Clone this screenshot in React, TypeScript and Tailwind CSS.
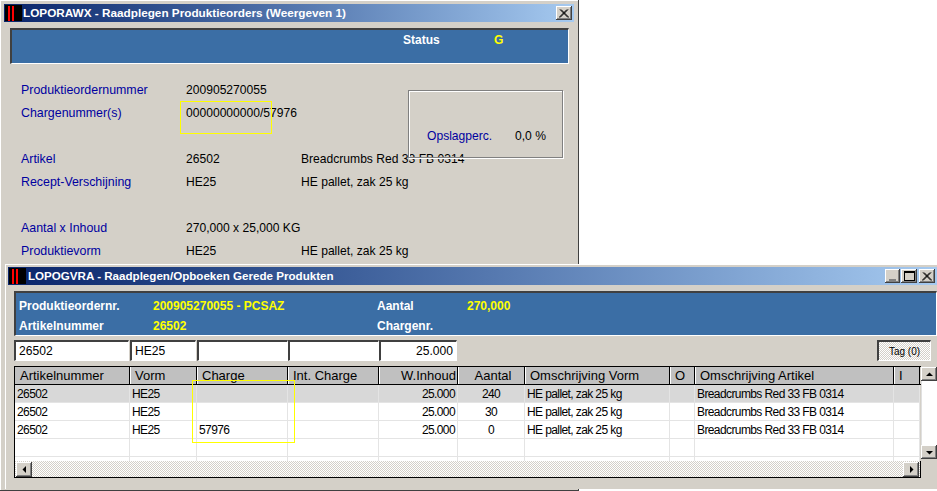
const font = "font-['Liberation_Sans',Arial,sans-serif]";
const raised = "bg-[#d4d0c8] shadow-[inset_-1px_-1px_#404040,inset_1px_1px_#fff,inset_-2px_-2px_#808080]";
const sunken = "border-t-2 border-l-2 border-t-[#404040] border-l-[#404040] border-r border-b border-r-white border-b-white";
const dither = "bg-[repeating-conic-gradient(#ffffff_0_25%,#d4d0c8_0_50%)] bg-[length:2px_2px]";
const gridCols = "grid-cols-[115px_67px_91px_91px_79px_67px_145px_25px_199px_26px]";

const columns = [
  { label: "Artikelnummer" },
  { label: "Vorm" },
  { label: "Charge" },
  { label: "Int. Charge" },
  { label: "W.Inhoud", align: "text-right" },
  { label: "Aantal", align: "text-center" },
  { label: "Omschrijving Vorm" },
  { label: "O" },
  { label: "Omschrijving Artikel" },
  { label: "I" },
];

const rows = [
  ["26502", "HE25", "", "", "25.000", "240", "HE pallet, zak 25 kg", "", "Breadcrumbs Red 33 FB 0314", ""],
  ["26502", "HE25", "", "", "25.000", "30", "HE pallet, zak 25 kg", "", "Breadcrumbs Red 33 FB 0314", ""],
  ["26502", "HE25", "57976", "", "25.000", "0", "HE pallet, zak 25 kg", "", "Breadcrumbs Red 33 FB 0314", ""],
  ["", "", "", "", "", "", "", "", "", ""],
];

const details = [
  { label: "Produktieordernummer", value: "200905270055" },
  { label: "Chargenummer(s)", value: "00000000000/57976" },
  { label: "" },
  { label: "Artikel", value: "26502", extra: "Breadcrumbs Red 33 FB 0314" },
  { label: "Recept-Verschijning", value: "HE25", extra: "HE pallet, zak 25 kg" },
  { label: "" },
  { label: "Aantal x Inhoud", value: "270,000 x 25,000 KG" },
  { label: "Produktievorm", value: "HE25", extra: "HE pallet, zak 25 kg" },
];

function AppIcon() {
  return (
    <svg width="17" height="16" viewBox="0 0 17 16" className="ml-[1px] shrink-0">
      <rect width="17" height="16" fill="#000" />
      <rect x="3" y="1" width="2" height="15" fill="#f00" />
      <rect x="7" y="1" width="2" height="15" fill="#f00" />
    </svg>
  );
}

function CloseGlyph() {
  return (
    <svg width="10" height="9" viewBox="0 0 10 9">
      <path d="M1 0.5 L9 8.5 M9 0.5 L1 8.5 M2 0.5 L10 8.5 M8 0.5 L0 8.5" stroke="#000" strokeWidth="1" fill="none" />
    </svg>
  );
}

function WinButton({ children, className = "" }: { children?: React.ReactNode; className?: string }) {
  return <div className={`${raised} flex h-[14px] w-4 items-center justify-center ${className}`}>{children}</div>;
}

function TitleBar({ title, children, textClass = "ml-[1px] text-[11.75px]" }: { title: string; children?: React.ReactNode; textClass?: string }) {
  return (
    <div className="flex h-[18px] items-center bg-gradient-to-r from-[#0a246a] to-[#a6caf0] pr-[2px]">
      <AppIcon />
      <span className={`${textClass} flex-1 whitespace-nowrap font-bold leading-[18px] text-white`}>{title}</span>
      {children}
    </div>
  );
}

function Arrow({ d }: { d: string }) {
  return (
    <svg width="9" height="9" viewBox="0 0 9 9">
      <path d={d} fill="#000" />
    </svg>
  );
}

function BackWindow() {
  return (
    <div className={`${font} absolute left-0 top-0 h-[491px] w-[579px] border-r border-b border-r-[#404040] border-b-[#404040] bg-[#d4d0c8] shadow-[inset_1px_1px_#fff] p-1`}>
      <TitleBar title="LOPORAWX - Raadplegen Produktieorders (Weergeven 1)">
        <WinButton>
          <CloseGlyph />
        </WinButton>
      </TitleBar>

      <div className={`${sunken} ml-[6px] mt-[6px] h-[36px] w-[559px] bg-[#3b6ea5]`}>
        <div className="flex pt-[2px] text-[12px] font-bold leading-[16px]">
          <span className="ml-[391px] w-[91px] text-white">Status</span>
          <span className="text-[#ffff00]">G</span>
        </div>
      </div>

      <div className="ml-[17px] mt-[15px] flex flex-col">
        {details.map((d, i) => (
          <div key={i} className="flex h-[23px] items-center whitespace-nowrap text-[12.1px] leading-[23px]">
            <span className="w-[165px] text-[12.4px] text-[#0000a0]">{d.label}</span>
            <span className="w-[115px] text-black">{d.value}</span>
            <span className="text-black">{d.extra}</span>
          </div>
        ))}
      </div>

      {/* group box lies over the article line */}
      <div className="absolute left-[408px] top-[90px] h-[68px] w-[155px] border border-[#808080] shadow-[1px_1px_#fff,inset_1px_1px_#fff]">
        <div className="mt-[37px] flex text-[12.1px] leading-[16px]">
          <span className="ml-[18px] w-[88px] text-[#0000a0]">Opslagperc.</span>
          <span className="text-black">0,0 %</span>
        </div>
      </div>
      <div className="absolute left-[180px] top-[101px] h-[33px] w-[92px] border border-[#ffff00]" />
    </div>
  );
}

function FilterField({ value, className, right }: { value?: string; className: string; right?: boolean }) {
  return (
    <div className={`${sunken} ${className} h-[21px] bg-white px-[3px] text-[12.1px] leading-[18px] text-black ${right ? "text-right" : ""}`}>
      {value}
    </div>
  );
}

function Grid() {
  return (
    <div className="ml-[6px] mt-[5px] flex h-[112px]">
      <div className="flex w-[907px] flex-col border-l border-t border-b border-black">
        <div className={`grid ${gridCols} h-[17px] w-[905px] bg-[#c0c0c0] text-[13px] leading-[18px] text-black`}>
          {columns.map((c, i) => (
            <div
              key={c.label}
              className={`overflow-hidden whitespace-nowrap border-r border-black pr-[1px] ${i > 0 ? "border-l border-l-white pl-[4px]" : "pl-[5px]"} ${c.align ?? ""}`}
            >
              {c.label}
            </div>
          ))}
        </div>
        <div className="h-[1px] w-[906px] bg-black" />
        <div className="h-[77px] w-[905px] overflow-hidden bg-white">
          {[...rows, rows[3]].map((row, r) => (
            <div
              key={r}
              className={`grid ${gridCols} h-[18px] border-b border-[#e4e4e4] text-[12px] leading-[19px] tracking-[-0.6px] text-black ${r === 0 ? "bg-[#d8d8d8]" : ""}`}
            >
              {row.map((cell, c) => (
                <div
                  key={c}
                  className={`overflow-hidden whitespace-nowrap border-r border-[#e4e4e4] px-[2px] ${columns[c].align ?? ""}`}
                >
                  {cell}
                </div>
              ))}
            </div>
          ))}
        </div>
        <div className={`${dither} flex h-[16px] items-center justify-between border-r border-black pl-[1px] pr-[1px]`}>
          <WinButton className="h-[15px]">
            <Arrow d="M6 1 L6 8 L2.5 4.5 Z" />
          </WinButton>
          <WinButton className="h-[15px]">
            <Arrow d="M3 1 L3 8 L6.5 4.5 Z" />
          </WinButton>
        </div>
      </div>
      <div className="flex w-4 flex-col">
        <div className="h-[1px] bg-transparent" />
        <WinButton className="h-4">
          <Arrow d="M4.5 2.5 L8 6 L1 6 Z" />
        </WinButton>
        <div className="h-[64px] border-l border-[#e0e0e0] bg-white" />
        <WinButton className="h-[13px]">
          <Arrow d="M1 3 L8 3 L4.5 6.5 Z" />
        </WinButton>
      </div>
    </div>
  );
}

function FrontWindow() {
  return (
    <div className={`${font} absolute left-[5px] top-[264px] h-[225px] w-[932px] border-t border-l border-t-white border-l-white bg-[#d4d0c8] pl-[2px] pt-[2px]`}>
      <TitleBar title="LOPOGVRA - Raadplegen/Opboeken Gerede Produkten" textClass="ml-[2px] text-[11.6px]">
        <div className="flex">
          <WinButton className="mr-[1px] w-[15px] items-end pb-[2px]">
            <div className="h-[2px] w-[7px] bg-[#808080]" />
          </WinButton>
          <WinButton className="mr-[2px]">
            <div className="h-[10px] w-[11px] border border-t-2 border-black" />
          </WinButton>
          <WinButton>
            <CloseGlyph />
          </WinButton>
        </div>
      </TitleBar>

      <div className={`${sunken} ml-[6px] mt-[6px] h-[45px] w-[923px] bg-[#3b6ea5]`}>
        <div className="grid grid-cols-[134px_224px_90px_1fr] pl-[3px] pt-[3px] text-[12px] font-bold leading-[20px]">
          <span className="text-white">Produktieordernr.</span>
          <span className="text-[#ffff00]">200905270055 - PCSAZ</span>
          <span className="text-white">Aantal</span>
          <span className="text-[#ffff00]">270,000</span>
          <span className="text-white">Artikelnummer</span>
          <span className="text-[#ffff00]">26502</span>
          <span className="text-white">Chargenr.</span>
          <span />
        </div>
      </div>

      <div className="ml-[6px] mt-[4px] flex h-[21px] items-start">
        <FilterField value="26502" className="w-[115px]" />
        <FilterField value="HE25" className="ml-[1px] w-[66px]" />
        <FilterField className="ml-[1px] w-[91px]" />
        <FilterField className="w-[91px]" />
        <FilterField value="25.000" right className="w-[78px]" />
        <div className={`${dither} ml-[420px] flex h-[21px] w-[54px] items-center justify-center border-t-2 border-l-2 border-t-[#404040] border-l-[#404040] border-r border-b border-r-white border-b-white text-[10px] text-black`}>
          Tag (0)
        </div>
      </div>

      <Grid />
    </div>
  );
}

export default function App() {
  return (
    <div className="relative h-[491px] w-[937px] overflow-hidden bg-white">
      <BackWindow />
      <FrontWindow />
      {/* highlight rectangle drawn over the grid */}
      <div className="absolute left-[192px] top-[380px] h-[63px] w-[103px] border border-[#ffff00]" />
    </div>
  );
}
